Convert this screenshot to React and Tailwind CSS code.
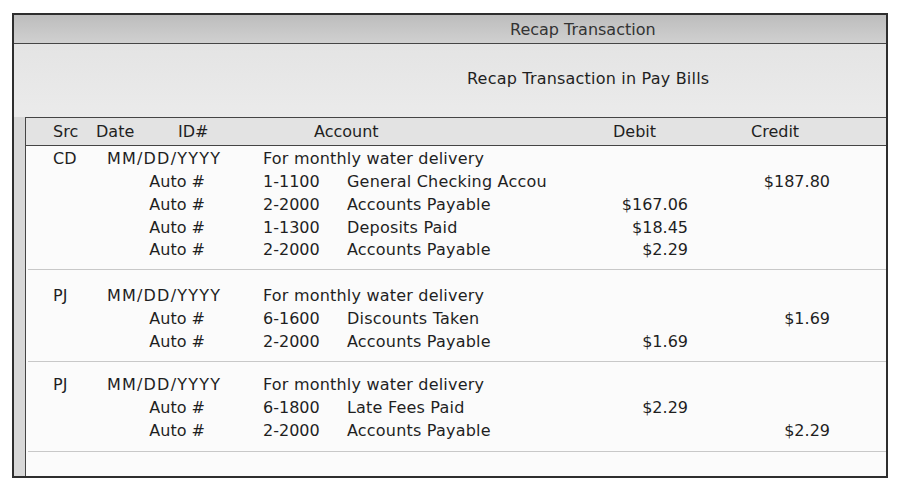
const groups = [
  {
    src: "CD",
    pad: "pt-[2px] pb-[7px]",
    rows: [
      { id: "1-1100", name: "General Checking Accou", credit: "$187.80" },
      { id: "2-2000", name: "Accounts Payable", debit: "$167.06" },
      { id: "1-1300", name: "Deposits Paid", debit: "$18.45" },
      { id: "2-2000", name: "Accounts Payable", debit: "$2.29" },
    ],
  },
  {
    src: "PJ",
    pad: "pt-[15px] pb-[8px]",
    rows: [
      { id: "6-1600", name: "Discounts Taken", credit: "$1.69" },
      { id: "2-2000", name: "Accounts Payable", debit: "$1.69" },
    ],
  },
  {
    src: "PJ",
    pad: "pt-[12px] pb-[9px]",
    rows: [
      { id: "6-1800", name: "Late Fees Paid", debit: "$2.29" },
      { id: "2-2000", name: "Accounts Payable", credit: "$2.29" },
    ],
  },
];

function Group({ group }) {
  return (
    <div className={`ml-[2px] border-b border-[#c8c8c8] ${group.pad}`}>
      <div className="-ml-[2px] flex h-[22.75px] items-center">
        <div className="w-[70px] pl-[27px]">{group.src}</div>
        <div className="w-[167px] pl-[11px] tracking-[1.2px]">MM/DD/YYYY</div>
        <div className="whitespace-nowrap tracking-[0.2px]">For monthly water delivery</div>
      </div>
      {group.rows.map((r, i) => (
        <div key={i} className="-ml-[2px] flex h-[22.75px] items-center">
          <div className="w-[70px]" />
          <div className="w-[167px] pr-[58px] text-right">Auto #</div>
          <div className="w-[84px]">{r.id}</div>
          <div className="w-[241px] whitespace-nowrap tracking-[0.2px]">{r.name}</div>
          <div className="w-[100px] text-right">{r.debit}</div>
          <div className="w-[142px] text-right">{r.credit}</div>
        </div>
      ))}
    </div>
  );
}

export default function App() {
  return (
    <div className="min-h-screen bg-white pt-[13px] pl-[12px] font-['DejaVu_Sans',sans-serif] text-[16px] text-[#1f1f1f]">
      <div className="flex h-[465px] w-[876px] flex-col border-2 border-[#2e2e2e] bg-[#f4f4f4]">
        {/* title bar */}
        <div className="flex h-[29px] items-center border-b border-[#454545] bg-gradient-to-b from-[#bdbdbd] to-[#d0d0d0] pl-[496px] pt-[1px] text-[#333]">
          Recap Transaction
        </div>
        <div className="flex h-[73px] items-center bg-gradient-to-b from-[#e4e4e4] to-[#ebebeb] pb-[4px] pl-[453px] tracking-[0.2px]">
          Recap Transaction in Pay Bills
        </div>

        <div className="flex flex-1">
          <div className="w-[11px] bg-[#d8d8d8]" />
          <div className="flex flex-1 flex-col border-l border-t border-[#454545] bg-[#fbfbfb]">
            <div className="flex h-[28px] items-center border-b border-[#454545] bg-[#e3e3e3]">
              <div className="w-[70px] pl-[27px]">Src</div>
              <div className="w-[82px]">Date</div>
              <div className="w-[85px]">ID#</div>
              <div className="w-[325px] pl-[51px]">Account</div>
              <div className="w-[100px] pl-[25px]">Debit</div>
              <div className="w-[142px] pl-[63px]">Credit</div>
            </div>
            {groups.map((g, i) => (
              <Group key={i} group={g} />
            ))}
          </div>
        </div>
      </div>
    </div>
  );
}
